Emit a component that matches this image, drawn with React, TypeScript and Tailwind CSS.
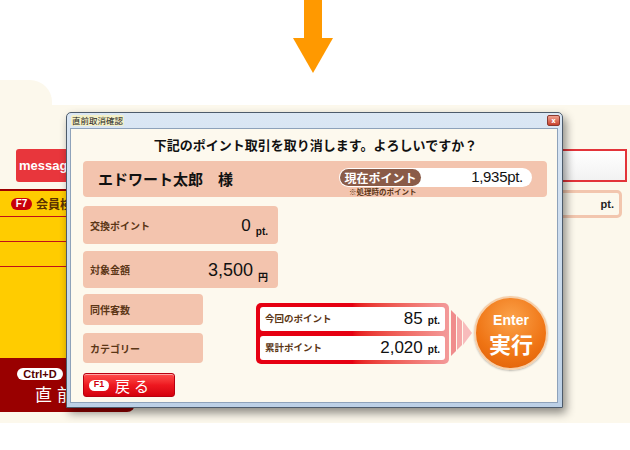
import React from "react";

const jp = "font-['Noto_Sans_CJK_JP','Noto_Sans',sans-serif]";
const num = "font-['Liberation_Sans','Noto_Sans_CJK_JP',sans-serif]";

function Field({
  label,
  className,
  children,
}: {
  label: string;
  className: string;
  children?: React.ReactNode;
}) {
  return (
    <div className={`flex items-center justify-between rounded-[4px] bg-[#f3c4ae] pl-[7px] pr-[10px] ${className}`}>
      <span className={`${jp} text-[10px] font-bold text-[#5b3616]`}>{label}</span>
      {children}
    </div>
  );
}

function PointRow({ label, value }: { label: string; value: string }) {
  return (
    <div className="flex h-[24px] items-center justify-between rounded-[3px] bg-white pl-[5px] pr-[5px]">
      <span className={`${jp} text-[9.5px] font-bold text-[#5b3616]`}>{label}</span>
      <span className={`${num} leading-none text-[#111]`}>
        <span className="text-[17px]">{value}</span>
        <span className="ml-[5px] text-[10px] font-bold">pt.</span>
      </span>
    </div>
  );
}

function Dialog() {
  return (
    <div className="absolute left-[66px] top-[32px] flex h-[296px] w-[497px] flex-col rounded-t-[5px] border border-[#4d5b6b] bg-gradient-to-b from-[#dbe7f4] to-[#bcd0e6] shadow-[3px_5px_10px_rgba(0,0,0,0.45)]">
      {/* title bar */}
      <div className="flex h-[15px] items-center justify-between pl-[4px] pr-[2px]">
        <span className={`${jp} rounded-[2px] bg-[#f4f0c8] px-[1px] text-[8.5px] leading-[11px] text-[#222]`}>直前取消確認</span>
        <div className="flex h-[11px] w-[13px] items-center justify-center rounded-[2px] border border-[#8a3a30] bg-gradient-to-b from-[#f0a090] to-[#c8402c] text-[7px] font-bold leading-none text-white">
          x
        </div>
      </div>

      {/* body */}
      <div className="mb-[4px] ml-[3px] mr-[4px] flex flex-1 flex-col border border-[#8ea2ba] bg-[#fdf9ee] pl-[12px] pr-[9px] pt-[7px]">
        <div className={`${jp} text-center text-[13px] font-bold leading-[18px] text-[#111]`}>
          下記のポイント取引を取り消します。よろしいですか？
        </div>

        {/* name panel */}
        <div className="mt-[7px] flex h-[36px] w-[464px] rounded-[4px] bg-[#f3c4ae]">
          <span className={`${jp} self-center pl-[15px] text-[15px] font-bold text-[#111]`}>エドワート太郎　様</span>
          <div className="ml-auto mr-[15px] flex flex-col pt-[7px]">
            <div className="flex h-[19px] w-[193px] items-center rounded-full bg-white pl-[1px] pr-[9px]">
              <span className={`${jp} flex h-[17px] w-[81px] items-center justify-center rounded-full bg-[#8a5b48] text-[12px] font-bold text-white`}>
                現在ポイント
              </span>
              <span className={`${num} ml-auto text-[15px] tracking-[-0.3px] text-[#111]`}>1,935pt.</span>
            </div>
            <span className={`${jp} pl-[10px] text-[7.5px] font-bold leading-[9px] text-[#5b3616]`}>※処理時のポイント</span>
          </div>
        </div>

        <Field label="交換ポイント" className="mt-[9px] h-[38px] w-[195px]">
          <span className={`${num} pt-[3px] leading-none text-[#111]`}>
            <span className="text-[17px]">0</span>
            <span className="ml-[5px] align-[-4px] text-[10px] font-bold">pt.</span>
          </span>
        </Field>
        <Field label="対象金額" className="mt-[7px] h-[37px] w-[195px]">
          <span className={`${num} pt-[3px] leading-none text-[#111]`}>
            <span className="text-[18px]">3,500</span>
            <span className={`${jp} ml-[5px] align-[-5px] text-[10px] font-bold`}>円</span>
          </span>
        </Field>

        <div className="mt-[6px] flex">
          <div className="flex w-[121px] flex-col">
            <Field label="同伴客数" className="h-[31px]" />
            <Field label="カテゴリー" className="mt-[8px] h-[30px]" />
            <button className="mt-[10px] flex h-[24px] w-[92px] items-center rounded-[3px] border border-[#b80010] bg-gradient-to-b from-[#ff4a4a] via-[#ee1820] to-[#d4000c] pl-[5px] shadow-[inset_0_1px_0_rgba(255,255,255,0.5)]">
              <span className={`${num} flex h-[11px] w-[20px] items-center justify-center rounded-full bg-white text-[9px] font-bold text-[#d00010]`}>F1</span>
              <span className={`${jp} ml-[6px] text-[15px] leading-none tracking-[4px] text-white`}>戻る</span>
            </button>
          </div>

          <div className="ml-[53px] mt-[2px] flex h-[74px] items-center">
            <div className="flex h-[61px] w-[193px] flex-col gap-[5px] rounded-[5px] bg-gradient-to-r from-[#e60012] via-[#e60012] to-[#f39a9a] p-[4px]">
              <PointRow label="今回のポイント" value="85" />
              <PointRow label="累計ポイント" value="2,020" />
            </div>
            <svg width="22" height="46" viewBox="0 0 22 46" className="ml-[2px]">
              <polygon points="0,0 5,5 5,41 0,46" fill="#f08c8c" />
              <polygon points="6,6 11,11 11,35 6,40" fill="#f5a8a8" />
              <polygon points="12,11 21,23 12,35" fill="#f8bcbc" />
            </svg>
            <div className="ml-[1px] flex h-[74px] w-[74px] flex-col items-center justify-center rounded-full border-2 border-[#f6cfaa] bg-[radial-gradient(circle_at_50%_30%,#fba24a,#ef7414_60%,#dc5c06)] pt-[6px] shadow-[0_1px_2px_rgba(0,0,0,0.25)]">
              <span className={`${num} text-[14px] font-bold leading-[14px] text-white`}>Enter</span>
              <span className={`${jp} text-[22px] font-bold leading-[32px] text-white`}>実行</span>
            </div>
          </div>
        </div>
      </div>
    </div>
  );
}

export default function App() {
  return (
    <div className="h-[450px] w-[630px] overflow-hidden bg-white">
      {/* arrow */}
      <div className="flex h-[80px]">
        <svg width="40" height="74" viewBox="0 0 40 74" className="ml-[293px]">
          <rect x="11" y="0" width="18" height="39" fill="#ff9900" />
          <polygon points="0,38 40,38 20,73" fill="#ff9900" />
        </svg>
      </div>

      {/* background app */}
      <div className="relative flex h-[343px] flex-col">
        <div className="flex h-[25px]">
          <div className="w-[52px] rounded-tr-[22px] bg-[#fcf8ec]" />
        </div>
        <div className="flex flex-1 justify-between bg-[#fcf8ec]">
          <div className="flex w-[135px] flex-col">
            <div className={`${num} ml-[16px] mt-[44px] flex h-[33px] w-[90px] items-center rounded-[3px] bg-[#e8363c] pl-[3px] text-[13px] font-bold text-white`}>
              message
            </div>
            <div className="mt-[7px] flex flex-col border-t-2 border-[#9c0000] bg-[#ffcc00]">
              <div className="flex h-[26px] items-center border-b border-[#c0101a] pl-[11px]">
                <span className={`${num} flex h-[12px] w-[21px] items-center justify-center rounded-full bg-[#c8000a] text-[10px] font-bold text-white`}>F7</span>
                <span className={`${jp} ml-[4px] text-[12px] font-bold text-[#5a3000]`}>会員検</span>
              </div>
              <div className="h-[25px] border-b border-[#c0101a]" />
              <div className="h-[25px] border-b border-[#c0101a]" />
              <div className="h-[91px]" />
            </div>
            <div className="flex h-[54px] flex-col rounded-br-[8px] bg-[#990000] pl-[17px] pt-[10px]">
              <span className={`${num} flex h-[12px] w-[46px] items-center justify-center rounded-full bg-white text-[11px] font-bold text-[#550000]`}>Ctrl+D</span>
              <span className={`${jp} ml-[18px] mt-[4px] text-[17px] leading-[20px] tracking-[5px] text-white`}>直前</span>
            </div>
          </div>

          <div className="flex w-[90px] flex-col items-end pr-[3px]">
            <div className="mt-[44px] h-[33px] w-[85px] border-2 border-[#e3343a] bg-gradient-to-b from-white to-[#f2f2f2]" />
            <div className="mr-[5px] mt-[8px] flex h-[28px] w-[80px] items-center justify-end rounded-[5px] border-[3px] border-[#f2c6ae] bg-[#fcf8ec] pr-[5px]">
              <span className={`${num} text-[11px] font-bold text-[#222]`}>pt.</span>
            </div>
          </div>
        </div>

        <Dialog />
      </div>
    </div>
  );
}
